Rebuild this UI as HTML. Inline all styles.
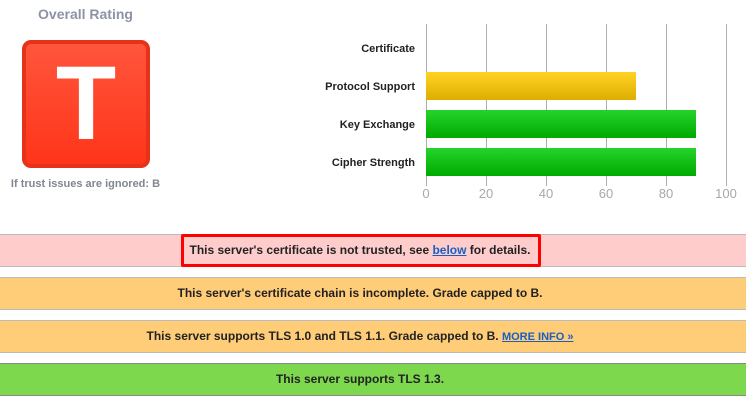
<!DOCTYPE html>
<html>
<head>
<meta charset="utf-8">
<style>
html,body{margin:0;padding:0;background:#fff;}
body{width:746px;height:400px;position:relative;overflow:hidden;font-family:"Liberation Sans",Arial,sans-serif;}
.a{position:absolute;white-space:nowrap;}
.grid{position:absolute;top:24px;height:162px;width:1px;background:#aeaeae;}
.lab{position:absolute;right:331px;font-size:11px;font-weight:bold;color:#222;line-height:14px;white-space:nowrap;}
.tick{position:absolute;top:186px;width:40px;text-align:center;font-size:13px;line-height:15px;color:#a8a8a8;}
.bar{position:absolute;left:426px;height:28px;}
.y{background:linear-gradient(#ffd324,#ddae00);}
.g{background:linear-gradient(#25d42b,#00aa00);}
.band{position:absolute;left:0;width:720px;padding-right:26px;height:31px;border-top:1px solid #bbb;border-bottom:1px solid #bbb;text-align:center;font-size:12px;font-weight:bold;line-height:31px;color:#222;}
a{color:#1a5fc0;text-decoration:underline;}
</style>
</head>
<body>
<div class="a" style="left:0;width:171px;top:6px;text-align:center;font-size:14px;line-height:16px;font-weight:bold;color:#8d93a3;">Overall Rating</div>
<div class="a" style="left:22px;top:40px;width:120px;height:120px;border:4px solid #e6321a;border-radius:9px;background:linear-gradient(#ff553b,#ff3519);color:#fff;font-size:105px;font-weight:bold;line-height:120px;text-align:center;"><span style="display:inline-block;transform:scaleX(.94)">T</span></div>
<div class="a" style="left:0;width:171px;top:177px;text-align:center;font-size:11px;line-height:14px;font-weight:bold;color:#81868f;">If trust issues are ignored: B</div>

<div class="grid" style="left:426px"></div>
<div class="grid" style="left:486px"></div>
<div class="grid" style="left:546px"></div>
<div class="grid" style="left:606px"></div>
<div class="grid" style="left:666px"></div>
<div class="grid" style="left:726px"></div>

<div class="bar y" style="top:72px;width:210px"></div>
<div class="bar g" style="top:110px;width:270px"></div>
<div class="bar g" style="top:148px;width:270px"></div>

<div class="lab" style="top:42px">Certificate</div>
<div class="lab" style="top:80px">Protocol Support</div>
<div class="lab" style="top:118px">Key Exchange</div>
<div class="lab" style="top:156px">Cipher Strength</div>

<div class="tick" style="left:406px">0</div>
<div class="tick" style="left:466px">20</div>
<div class="tick" style="left:526px">40</div>
<div class="tick" style="left:586px">60</div>
<div class="tick" style="left:646px">80</div>
<div class="tick" style="left:706px">100</div>

<div class="band" style="top:234px;background:#ffcccc">This server's certificate is not trusted, see <a href="#">below</a> for details.</div>
<div class="a" style="left:181px;top:234px;width:354px;height:27px;border:3px solid #f00;border-radius:2px;"></div>
<div class="band" style="top:277px;background:#ffcc77">This server's certificate chain is incomplete. Grade capped to B.</div>
<div class="band" style="top:320px;background:#ffcc77">This server supports TLS 1.0 and TLS 1.1. Grade capped to B. <a href="#" style="font-size:11px">MORE INFO »</a></div>
<div class="band" style="top:363px;background:#7dd84e;border-color:#888">This server supports TLS 1.3.</div>
</body>
</html>
